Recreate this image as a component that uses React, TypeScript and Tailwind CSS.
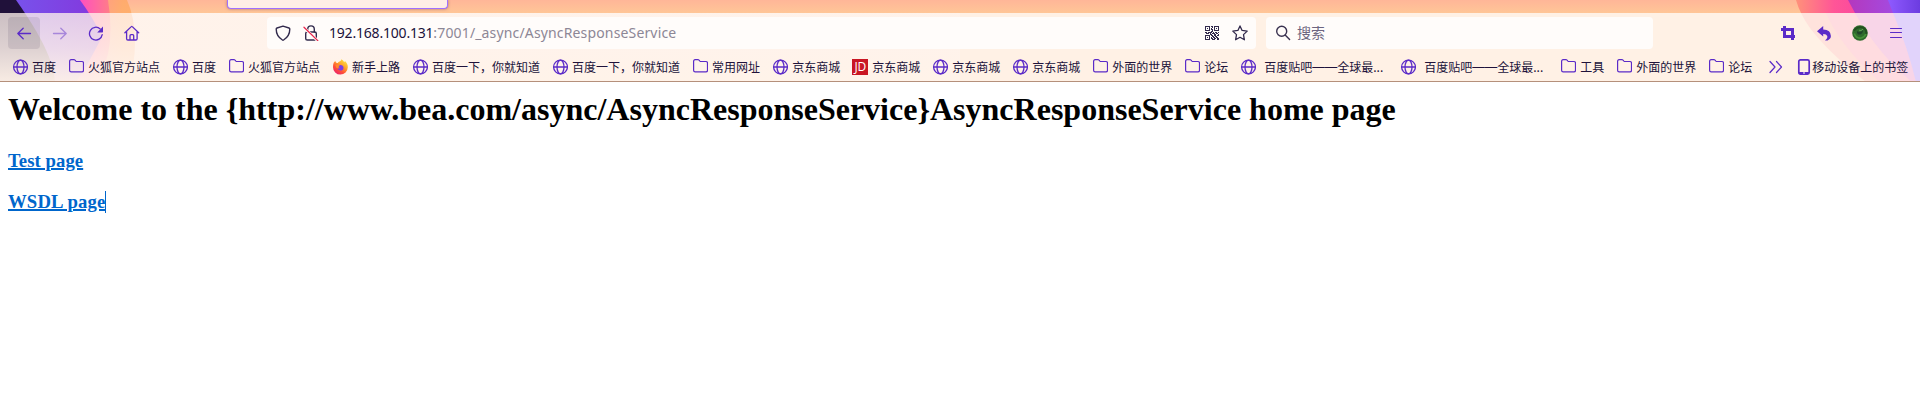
import React from 'react';

type IconKind = 'globe' | 'folder' | 'firefox' | 'jd';

interface Bookmark {
  icon: IconKind;
  label: string;
  wide?: boolean;
}

const bookmarks: Bookmark[] = [
  { icon: 'globe', label: '百度' },
  { icon: 'folder', label: '火狐官方站点' },
  { icon: 'globe', label: '百度' },
  { icon: 'folder', label: '火狐官方站点' },
  { icon: 'firefox', label: '新手上路' },
  { icon: 'globe', label: '百度一下，你就知道' },
  { icon: 'globe', label: '百度一下，你就知道' },
  { icon: 'folder', label: '常用网址' },
  { icon: 'globe', label: '京东商城' },
  { icon: 'jd', label: '京东商城' },
  { icon: 'globe', label: '京东商城' },
  { icon: 'globe', label: '京东商城' },
  { icon: 'folder', label: '外面的世界' },
  { icon: 'folder', label: '论坛' },
  { icon: 'globe', label: '百度贴吧——全球最...', wide: true },
  { icon: 'globe', label: '百度贴吧——全球最...', wide: true },
  { icon: 'folder', label: '工具' },
  { icon: 'folder', label: '外面的世界' },
  { icon: 'folder', label: '论坛' },
];

const stroke = {
  fill: 'none',
  stroke: 'currentColor',
  strokeLinecap: 'round' as const,
  strokeLinejoin: 'round' as const,
};

function Svg({ children, className = '' }: { children: React.ReactNode; className?: string }) {
  return (
    <svg viewBox="0 0 16 16" className={`h-4 w-4 shrink-0 ${className}`}>
      {children}
    </svg>
  );
}

function BookmarkIcon({ kind }: { kind: IconKind }) {
  if (kind === 'globe') {
    return (
      <Svg className="text-[#5b2bc8]">
        <g {...stroke} strokeWidth="1.3">
          <circle cx="8.5" cy="8" r="6.9" />
          <ellipse cx="8.5" cy="8" rx="3.5" ry="6.9" />
          <path d="M1.8 8h13.4" />
        </g>
      </Svg>
    );
  }
  if (kind === 'folder') {
    return (
      <Svg className="text-[#5b2bc8]">
        <path
          {...stroke}
          strokeWidth="1.2"
          d="M1.6 2.4q0-1.8 1.6-1.8h2.6q.8 0 1.3.6l.8.9q.4.4 1 .4h5q1.6 0 1.6 1.6v7.2q0 1.6-1.6 1.6H3.2q-1.6 0-1.6-1.6z"
        />
      </Svg>
    );
  }
  if (kind === 'jd') {
    return (
      <span className="flex h-4 w-4 shrink-0 items-center justify-center bg-[#c91623] font-['Open_Sans',sans-serif] text-[12px] leading-none font-medium tracking-[-0.3px] text-white">
        JD
      </span>
    );
  }
  return (
    <Svg>
      <defs>
        <linearGradient id="flame" x1=".9" y1="0" x2=".2" y2="1">
          <stop offset="0" stopColor="#fff04a" />
          <stop offset=".38" stopColor="#ffa92c" />
          <stop offset=".68" stopColor="#ff5138" />
          <stop offset="1" stopColor="#e81c72" />
        </linearGradient>
      </defs>
      <path
        fill="url(#flame)"
        d="M1.7 3.8 3.2 2l1 1.7 1.7.2C7 2 9.5 2.2 9.2.2c2 1 2.5 2 3 3l.8-1.1C15 4 15.9 6 15.8 8.3A7.4 7.4 0 0 1 8.4 15.6 7.4 7.4 0 0 1 1 8.2c0-1.7.2-3 .7-4.4z"
      />
      <path fill="#7a3ee8" d="M5.5 6.5 8.2 5.9q3.3.1 3.3 3-.3 2.6-3.2 2.6-2.5-.2-2.9-2.2 1.3.7 2.6-.3-1.9-.3-2.5-2.5z" />
      <path fill="#ff8a2b" d="M3.5 6q2.4-.8 4.4.4l-1 1.2-.8 1.8-1.8-.6z" />
    </Svg>
  );
}

function ThemeArt() {
  return (
    <svg
      className="absolute inset-0 h-[82px] w-[1920px]"
      viewBox="0 0 1920 82"
      preserveAspectRatio="none"
    >
      <defs>
        <linearGradient id="sky" gradientUnits="userSpaceOnUse" x1="0" y1="0" x2="0" y2="14">
          <stop offset="0" stopColor="#ffb698" />
          <stop offset="1" stopColor="#ffc797" />
        </linearGradient>
        <linearGradient id="violet" x1="0" y1="0" x2="1" y2="0">
          <stop offset="0" stopColor="#7657ee" />
          <stop offset="1" stopColor="#8436dc" />
        </linearGradient>
        <linearGradient id="pink" gradientUnits="userSpaceOnUse" x1="80" y1="0" x2="110" y2="0">
          <stop offset="0" stopColor="#ff4fc0" />
          <stop offset="1" stopColor="#ff7d88" />
        </linearGradient>
        <linearGradient id="orange" gradientUnits="userSpaceOnUse" x1="106" y1="0" x2="134" y2="0">
          <stop offset="0" stopColor="#ff9a78" />
          <stop offset=".6" stopColor="#ffa75f" />
        </linearGradient>
        <linearGradient id="coral" gradientUnits="userSpaceOnUse" x1="1795" y1="0" x2="1860" y2="0">
          <stop offset="0" stopColor="#ff9379" />
          <stop offset=".6" stopColor="#ff5597" />
          <stop offset="1" stopColor="#fb489e" />
        </linearGradient>
        <linearGradient id="magenta" gradientUnits="userSpaceOnUse" x1="1848" y1="0" x2="1896" y2="0">
          <stop offset="0" stopColor="#b438bd" />
          <stop offset="1" stopColor="#a34be2" />
        </linearGradient>
        <linearGradient id="indigo" gradientUnits="userSpaceOnUse" x1="1888" y1="0" x2="1920" y2="0">
          <stop offset="0" stopColor="#8f5aff" />
          <stop offset="1" stopColor="#6c3ce0" />
        </linearGradient>
        <linearGradient id="veil" x1="0" y1="0" x2="0" y2="1">
          <stop offset="0" stopColor="#fff3ec" stopOpacity=".77" />
          <stop offset=".5" stopColor="#fff3ec" stopOpacity=".85" />
          <stop offset="1" stopColor="#fff3e9" stopOpacity=".97" />
        </linearGradient>
      </defs>
      <rect width="1920" height="14" fill="url(#sky)" />
      <rect y="13" width="1920" height="69" fill="#fff1e5" />
      <path d="M0 0h127q8 18 8 42t-7 40H0z" fill="url(#orange)" opacity=".75" />
      <path d="M0 0h108q5 30 0 54l-8 28H0z" fill="url(#pink)" />
      <path d="M0 0h80q14 19 22 37l-16 30-10 15H0z" fill="url(#violet)" />
      <path d="M0 0h16q24 34 33 57 5 14 6 25H0z" fill="#20113a" />
      <rect y="13" width="960" height="69" fill="url(#veil)" />

      <path d="M1796 0h124v13h-119q-3-6-5-13z" fill="url(#coral)" />
      <path d="M1848 0h72v13h-65z" fill="url(#magenta)" />
      <path d="M1888 0h32v13h-27z" fill="url(#indigo)" />
      <path d="M1801 13h119v69h-54q-38-30-56-54-5-7-9-15z" fill="#ffe2dc" />
      <path d="M1826 13h94v69h-40q-40-36-54-69z" fill="#ffdce0" />
      <path d="M1855 13h65v69h-8q-34-28-57-69z" fill="#f8d5e8" />
      <path d="M1893 13h27v69h-4q-8-34-23-69z" fill="#e1d3fb" />
    </svg>
  );
}

function NavButton({ children, active = false }: { children: React.ReactNode; active?: boolean }) {
  return (
    <button
      className={`flex h-8 w-8 shrink-0 items-center justify-center rounded text-[#5b2bc8] ${
        active ? 'bg-[#20113a]/10' : ''
      }`}
    >
      {children}
    </button>
  );
}

const qrRows = [
  '11111011011111',
  '10001001010001',
  '10101010010101',
  '10001011010001',
  '11111001011111',
  '00000011000000',
  '11011110101101',
  '01110101110110',
  '00000110011001',
  '11111011011011',
  '10001001101100',
  '10101010110110',
  '10001011011011',
  '11111001110011',
];

function QrIcon() {
  const d = qrRows
    .flatMap((row, y) => [...row].map((c, x) => (c === '1' ? `M${x} ${y}h1v1h-1z` : '')))
    .join('');
  return (
    <svg viewBox="0 0 14 14" className="block h-[14px] w-[14px]" shapeRendering="crispEdges">
      <path fill="currentColor" d={d} />
    </svg>
  );
}

function Toolbar() {
  return (
    <div className="flex h-[40px] items-center pl-2 pr-2">
      <div className="flex gap-1">
        <NavButton active>
          <Svg>
            <path {...stroke} strokeWidth="1.3" d="M14.5 8.5H1.8M7.2 3.2 1.8 8.5l5.4 5.3" />
          </Svg>
        </NavButton>
        <NavButton>
          <Svg className="opacity-45">
            <path {...stroke} strokeWidth="1.3" d="M1.5 8.5h12.7M8.8 3.2l5.4 5.3-5.4 5.3" />
          </Svg>
        </NavButton>
        <NavButton>
          <Svg>
            <path {...stroke} strokeWidth="1.3" d="M14.2 9.6A6.4 6.4 0 1 1 12.2 3.9" />
            <path fill="currentColor" d="M15 1.5v5.3q0 .6-.6.6H9.2z" />
          </Svg>
        </NavButton>
        <NavButton>
          <Svg>
            <path
              {...stroke}
              strokeWidth="1.3"
              d="M.9 7.7 7.3 1.6q.5-.5 1 0l6.4 6.1M2.6 6.5v7.2q0 1.3 1.3 1.3h7.9q1.3 0 1.3-1.3V6.5M6 14.7v-4q0-1 1-1h1.7q1 0 1 1v4"
            />
          </Svg>
        </NavButton>
      </div>

      <div className="ml-[119px] flex h-8 w-[989px] items-center rounded bg-[#fffcfa] pl-2 pr-2 text-[#322a4c]">
        <Svg>
          <path
            {...stroke}
            strokeWidth="1.4"
            d="M8 1.2 14 3q.8.3.8 1.1 0 7.2-6.2 10.9-.6.4-1.2 0Q1.2 11.3 1.2 4.1q0-.8.8-1.1z"
          />
        </Svg>
        <Svg className="ml-3">
          <path {...stroke} strokeWidth="1.4" d="M4.7 7V4.2a3.3 3.3 0 0 1 6.6 0V7" />
          <rect {...stroke} strokeWidth="1.4" x="2.7" y="7" width="10.6" height="8" rx="1.6" />
          <path d="M.6 2.3 15 16" stroke="#fffcfa" strokeWidth="2.8" />
          <path d="M1 2.3 14.8 15.6" stroke="#e8274d" strokeWidth="1.3" strokeLinecap="round" />
        </Svg>
        <span className="ml-[10px] pb-[2px] whitespace-pre font-['Noto_Sans',sans-serif] text-[14px] tracking-[0.15px] text-[#8d8796]">
          <span className="tracking-[-0.2px] text-[#20123a]">192.168.100.131</span>:7001/_async/AsyncResponseService
        </span>
        <span className="ml-auto mr-[13px]">
          <QrIcon />
        </span>
        <Svg>
          <path
            {...stroke}
            strokeWidth="1.3"
            d="m8 .9 2.1 4.5 5.1.7-3.7 3.5.9 5.2L8 12.3l-4.4 2.5.9-5.2L.8 6.1l5.1-.7z"
          />
        </Svg>
      </div>

      <div className="ml-[10px] flex h-8 w-[387px] items-center rounded bg-[#fffcfa] pl-2 text-[#3a3250]">
        <Svg className="ml-[1px]">
          <circle {...stroke} strokeWidth="1.4" cx="6.7" cy="6.3" r="5" />
          <path {...stroke} strokeWidth="1.4" d="m10.4 10.2 4.2 4.4" />
        </Svg>
        <span className="ml-[6px] pb-px font-['Noto_Sans_CJK_SC',sans-serif] text-[14px] text-[#6d6580]">搜索</span>
      </div>

      <div className="ml-auto flex gap-1">
        <NavButton>
          <Svg>
            <path
              fill="currentColor"
              fillRule="evenodd"
              d="M3 1h3v2h8v7h1v3h-1v2h-3v-2H3V6H1V3h2zM6 6v4h5V6z"
            />
          </Svg>
        </NavButton>
        <NavButton>
          <Svg>
            <path fill="currentColor" d="M7.2 1v3.4q7.7.4 7.7 6.6 0 3-3.3 4.4H9q3-2.2 2.2-4.3Q10.5 9 7.2 9.1v2.4L1 6.2z" />
          </Svg>
        </NavButton>
        <NavButton>
          <Svg>
            <circle cx="8" cy="8" r="7.8" fill="#2e6b2c" />
            <path d="M2 5.5q4-4.6 8.5-3 4.5 2 3.5 6.5" fill="none" stroke="#225020" strokeWidth="1.8" />
            <path d="M5 6q3.5 2.5 6-1 0 5-4.8 4.4Q4.5 8.500 5 6z" fill="#20452a" />
            <path d="M2.3 8.5q2 5.500 7 4.500 3.500-1 4.500-4" fill="none" stroke="#469239" strokeWidth="1.6" />
            <path d="M7 5.2q2 1.2 4-1" fill="none" stroke="#66a35a" strokeWidth=".9" />
          </Svg>
        </NavButton>
        <NavButton>
          <Svg>
            <path {...stroke} strokeWidth="1.1" d="M2.5 3.5h11M2.5 7.5h11M2.5 12.5h11" />
          </Svg>
        </NavButton>
      </div>
    </div>
  );
}

function Label({ text }: { text: string }) {
  const [before, after] = text.split('——');
  if (after === undefined) return <span>{text}</span>;
  return (
    <span className="flex">
      {before}
      <span className="w-[25px] text-center font-['Liberation_Sans',sans-serif] text-[12.5px]">——</span>
      {after}
    </span>
  );
}

function BookmarksBar() {
  return (
    <div className="flex h-[28px] items-center pl-3 font-['Noto_Sans_CJK_SC',sans-serif] text-[12px] leading-4 text-[#20123a]">
      <div className="flex gap-3">
        {bookmarks.map((b, i) => (
          <a key={i} className={`flex items-center whitespace-nowrap ${b.wide ? 'w-[148px] gap-2' : 'gap-1'}`}>
            <BookmarkIcon kind={b.icon} />
            <Label text={b.label} />
          </a>
        ))}
      </div>
      <Svg className="ml-4 text-[#5b2bc8]">
        <path {...stroke} strokeWidth="1.2" d="m2 2.5 5 5.5-5 5.5M8.5 2.5l5 5.500-5 5.500" />
      </Svg>
      <a className="ml-[12px] flex items-center whitespace-nowrap">
        <Svg className="text-[#5b2bc8]">
          <rect {...stroke} strokeWidth="1.7" x="2.8" y=".9" width="10.4" height="14.2" rx="1.6" />
          <path d="M3 13h10v2H3z" fill="currentColor" />
          <path d="M7 14h2" stroke="#fff" strokeWidth="1" />
        </Svg>
        <span className="-mt-px">移动设备上的书签</span>
      </a>
    </div>
  );
}

export default function App() {
  return (
    <div className="h-[408px] w-[1920px] overflow-hidden bg-white">
      <header className="relative h-[82px] overflow-hidden border-b border-[#b5907b]">
        <ThemeArt />
        <div className="relative flex flex-col">
          <div className="flex h-[13px] pl-[227px]">
            <div className="h-[9px] w-[221px] rounded-b border border-t-0 border-[#a070ff] bg-[#ffeee6] shadow-[0_0_3px_rgba(80,40,80,0.5)]" />
          </div>
          <Toolbar />
          <BookmarksBar />
        </div>
      </header>
      <main className="px-2 font-['Liberation_Serif',serif] font-bold">
        <h1 className="pt-[9px] text-[32px] leading-[37px] text-black">
          Welcome to the {'{http://www.bea.com/async/AsyncResponseService}'}AsyncResponseService home page
        </h1>
        <h3 className="mt-[22px] text-[18.72px] leading-[22px] tracking-[0.06px]">
          <a className="text-[#0066cc] underline decoration-2">Test page</a>
        </h3>
        <h3 className="mt-[19px] flex text-[18.72px] leading-[22px] tracking-[0.14px]">
          <a className="border-r border-[#0066cc] text-[#0066cc] underline decoration-2">WSDL page</a>
        </h3>
      </main>
    </div>
  );
}
